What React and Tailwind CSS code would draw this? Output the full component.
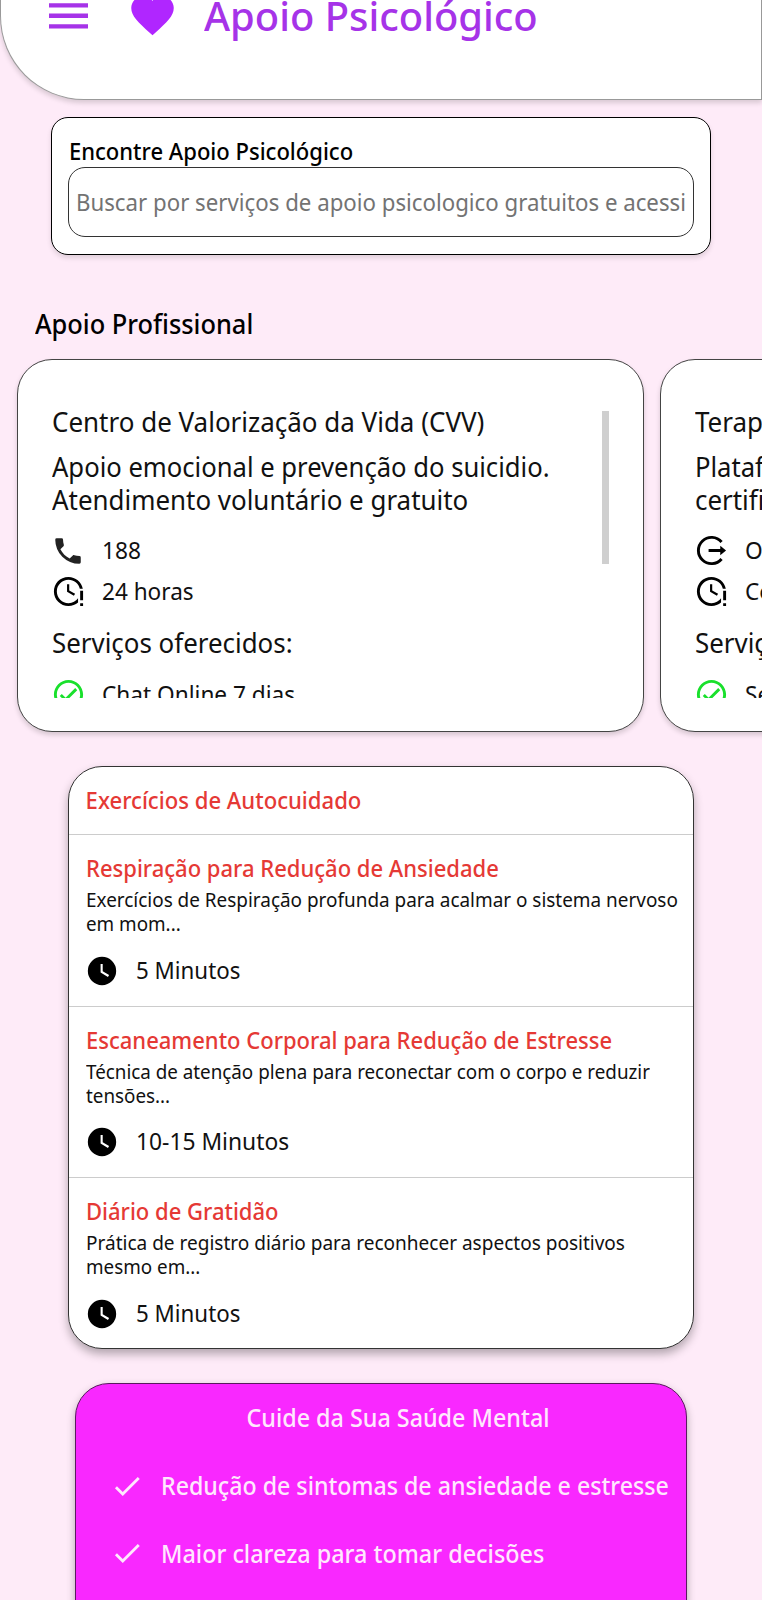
function Clock() {
  return <svg viewBox="0 0 24 24" className="size-[34px] shrink-0 text-black" fill="currentColor"><path d="M12 2A10 10 0 0 0 2 12a10 10 0 0 0 10 10 10 10 0 0 0 10-10A10 10 0 0 0 12 2m4.2 14.2L11 13V7h1.5v5.2l4.5 2.7z" /></svg>;
}
function ClockAlert() {
  return <svg viewBox="0 0 24 24" className="size-[35px] shrink-0 text-black" fill="currentColor"><path d="M11 7v5.110l4.710 2.790.79-1.280-4-2.370V7zM12 2C5.970 2 2 6.500 2 12c0 5.500 4.500 10 10 10 2.500 0 4.800-.92 6.550-2.450V16.700A8 8 0 0 1 12 20c-4.420 0-8-3.580-8-8s3.580-8 8-8c3.750 0 6.900 2.590 7.760 6.070h2.050C20.880 5.450 16.830 2 12 2M20 11.500h2V18h-2zm0 8.500h2v2h-2z" /></svg>;
}
function Exit() {
  return <svg viewBox="0 0 24 24" className="size-[35px] shrink-0 text-black" fill="none" stroke="currentColor" strokeWidth="2"><path d="M18.900 6.200A9 9 0 1 0 18.900 17.800M10 12h8.600" /><path d="M18 8.700 22 12l-4 3.300z" fill="currentColor" stroke="none" /></svg>;
}
function CheckCircle() {
  return <svg viewBox="0 0 24 24" className="size-[35px] shrink-0 text-[#19e02c]" fill="currentColor"><path d="M12 2C6.500 2 2 6.500 2 12s4.500 10 10 10 10-4.500 10-10S17.500 2 12 2m0 18c-4.410 0-8-3.590-8-8s3.590-8 8-8 8 3.590 8 8-3.590 8-8 8m4.590-12.420L10 14.170l-2.590-2.580L6 13l4 4 8-8z" /></svg>;
}
function Phone() {
  return <svg viewBox="0 0 24 24" className="mr-[1px] size-[34px] shrink-0 text-[#222]" fill="currentColor"><path d="M6.620 10.790c1.440 2.830 3.760 5.150 6.590 6.590l2.200-2.200c.28-.28.67-.36 1.020-.25 1.120.37 2.320.57 3.570.57a1 1 0 0 1 1 1V20a1 1 0 0 1-1 1A17 17 0 0 1 3 4a1 1 0 0 1 1-1h3.500a1 1 0 0 1 1 1c0 1.250.2 2.450.57 3.570.11.35.03.74-.25 1.020z" /></svg>;
}
function Check() {
  return <svg viewBox="0 0 24 24" className="size-[34px] shrink-0" fill="currentColor"><path d="M21 7 9 19l-5.500-5.500 1.410-1.410L9 16.170 19.590 5.590z" /></svg>;
}

const services = [
  {
    name: "Centro de Valorização da Vida (CVV)",
    lines: ["Apoio emocional e prevenção do suicidio.", "Atendimento voluntário e gratuito"],
    Icon: Phone, contact: "188", hours: "24 horas", first: "Chat Online 7 dias", bar: true,
  },
  {
    name: "Terapia Online",
    lines: ["Plataforma", "certificada"],
    Icon: Exit, contact: "Online", hours: "Consulta", first: "Sessões", bar: false,
  },
];

function Service({ s }) {
  return (
    <article className="h-[373px] w-[627px] shrink-0 rounded-[35px] border border-[#444] bg-white pt-[47px] pr-[34px] pl-[34px] shadow-[0_3px_5px_rgba(0,0,0,0.16)]">
      <div className="flex h-[291px] justify-between overflow-hidden">
        <div className="text-[27px] whitespace-nowrap text-[#111]">
          <h3 className="h-[46px] origin-left scale-x-[0.962] leading-[30px]">{s.name}</h3>
          <p className="h-[32.5px] origin-left scale-x-[0.949] leading-[28px]">{s.lines[0]}</p>
          <p className="h-[32.5px] origin-left scale-x-[0.96] leading-[27px]">{s.lines[1]}</p>
          <p className="mt-[12px] -ml-[1px] flex h-[41px] items-center gap-4 text-[24px]"><s.Icon /><span className="-mt-[2px] origin-left scale-x-[0.945]">{s.contact}</span></p>
          <p className="-ml-[1px] flex h-[41px] items-center gap-4 text-[24px]"><ClockAlert /><span className="-mt-[2px] origin-left scale-x-[0.94]">{s.hours}</span></p>
          <p className="mt-[11px] h-[40px] origin-left scale-x-[0.959] leading-[40px]">Serviços oferecidos:</p>
          <p className="mt-[11px] -ml-[1px] flex h-[41px] items-center gap-4 text-[24px]"><CheckCircle /><span className="-mt-[2px] origin-left scale-x-[0.943]">{s.first}</span></p>
        </div>
        {s.bar && <div className="mt-[4px] h-[153px] w-[7px] shrink-0 bg-[#cfcfcf]" />}
      </div>
    </article>
  );
}

const exercises = [
  { title: "Respiração para Redução de Ansiedade", text: "Exercícios de Respiração profunda para acalmar o sistema nervoso", textFit: "scale-x-[0.946]", rest: "em mom...", time: "5 Minutos", timeFit: "scale-x-[0.93]" },
  { title: "Escaneamento Corporal para Redução de Estresse", text: "Técnica de atenção plena para reconectar com o corpo e reduzir", textFit: "scale-x-[0.94]", rest: "tensões...", time: "10-15 Minutos", timeFit: "scale-x-[0.95]" },
  { title: "Diário de Gratidão", text: "Prática de registro diário para reconhecer aspectos positivos", textFit: "scale-x-[0.951]", rest: "mesmo em...", time: "5 Minutos", timeFit: "scale-x-[0.93]" },
];

const benefits = [
  { text: "Redução de sintomas de ansiedade e estresse", fit: "scale-x-[0.927]" },
  { text: "Maior clareza para tomar decisões", fit: "scale-x-[0.935]" },
];

export default function App() {
  return (
    <div className="h-[1600px] w-[762px] overflow-hidden bg-[#feebf8] font-['Noto_Sans','Open_Sans',sans-serif] whitespace-nowrap">
      <header className="flex h-[100px] rounded-bl-[84px] border-r border-b border-l border-[#999] bg-white pl-12 shadow-[0_3px_5px_rgba(0,0,0,0.15)]">
        <svg viewBox="0 0 39 26" className="mt-[2.5px] h-[26px] w-[39px] shrink-0 fill-[#a633e8]"><path d="M0 .200h39v4.300H0zM0 10.600h39v4.300H0zM0 21.200h39v4.300H0z" /></svg>
        <svg viewBox="0 0 24 24" className="-mt-[10.5px] ml-[39px] size-[51px] shrink-0 fill-[#b026ff]"><path d="m12 21.350-1.450-1.320C5.400 15.360 2 12.270 2 8.500 2 5.410 4.420 3 7.500 3c1.740 0 3.410.81 4.500 2.080C13.090 3.810 14.760 3 16.500 3 19.580 3 22 5.410 22 8.500c0 3.770-3.400 6.860-8.550 11.530z" /></svg>
        <h1 className="-mt-[14px] ml-[26px] origin-left scale-x-[0.997] text-[40px] leading-[60px] font-medium text-[#a633e8]">Apoio Psicológico</h1>
      </header>

      <section className="mt-[17px] ml-[51px] h-[138px] w-[660px] rounded-[17px] border border-black bg-white px-4 pt-[18px] shadow-[0_3px_5px_rgba(0,0,0,0.12)]">
        <h2 className="h-[31px] origin-left scale-x-[0.918] pl-[1px] text-[24px] leading-[29px] font-medium text-black">Encontre Apoio Psicológico</h2>
        <div className="h-[70px] w-[626px] rounded-[17px] border border-[#333] pl-[7px] text-[24px] leading-[67px] text-[#737373]">
          <div className="origin-left scale-x-[0.927]">Buscar por serviços de apoio psicologico gratuitos e acessi</div>
        </div>
      </section>

      <h2 className="mt-[50px] ml-[35px] h-[54px] origin-left scale-x-[0.94] text-[27px] leading-[38px] font-medium text-black">Apoio Profissional</h2>
      <div className="ml-[17px] flex gap-4">{services.map((s) => <Service key={s.name} s={s} />)}</div>

      <section className="mt-[34px] ml-[68px] h-[583px] w-[626px] rounded-[34px] border border-[#333] bg-white text-[#111] shadow-[0_5px_10px_rgba(0,0,0,0.3)]">
        <h2 className="h-[67px] origin-left scale-x-[0.921] pl-[18px] text-[24px] leading-[66px] font-medium text-[#e53935]">Exercícios de Autocuidado</h2>
        {exercises.map((x) => (
          <article key={x.title} className="h-[171.5px] border-t border-[#ccc] pt-[17px] pl-[17px]">
            <h3 className="h-[33px] origin-left scale-x-[0.917] text-[24px] leading-[32.5px] font-medium text-[#e53935]">{x.title}</h3>
            <p className={`h-[24px] origin-left text-[20px] leading-[29px] ${x.textFit}`}>{x.text}</p>
            <p className="h-[24px] origin-left scale-x-[0.94] text-[20px] leading-[29px]">{x.rest}</p>
            <p className="mt-[17px] -ml-[1px] flex h-[41px] items-center gap-[17px] text-[24px]"><Clock /><span className={`-mt-[2px] origin-left ${x.timeFit}`}>{x.time}</span></p>
          </article>
        ))}
      </section>

      <section className="mt-[34px] ml-[75px] h-[300px] w-[612px] rounded-t-[34px] border border-[#5a1a60] bg-[#f928ff] pl-[34px] text-[25px] font-medium text-[#ffe8fd] shadow-[0_4px_8px_rgba(0,0,0,0.3)]">
        <h2 className="h-[68px] scale-x-[0.933] text-center leading-[67px]">Cuide da Sua Saúde Mental</h2>
        {benefits.map((b) => (
          <p key={b.text} className="flex h-[67.5px] items-center gap-[17px]"><Check /><span className={`origin-left ${b.fit}`}>{b.text}</span></p>
        ))}
      </section>
    </div>
  );
}
